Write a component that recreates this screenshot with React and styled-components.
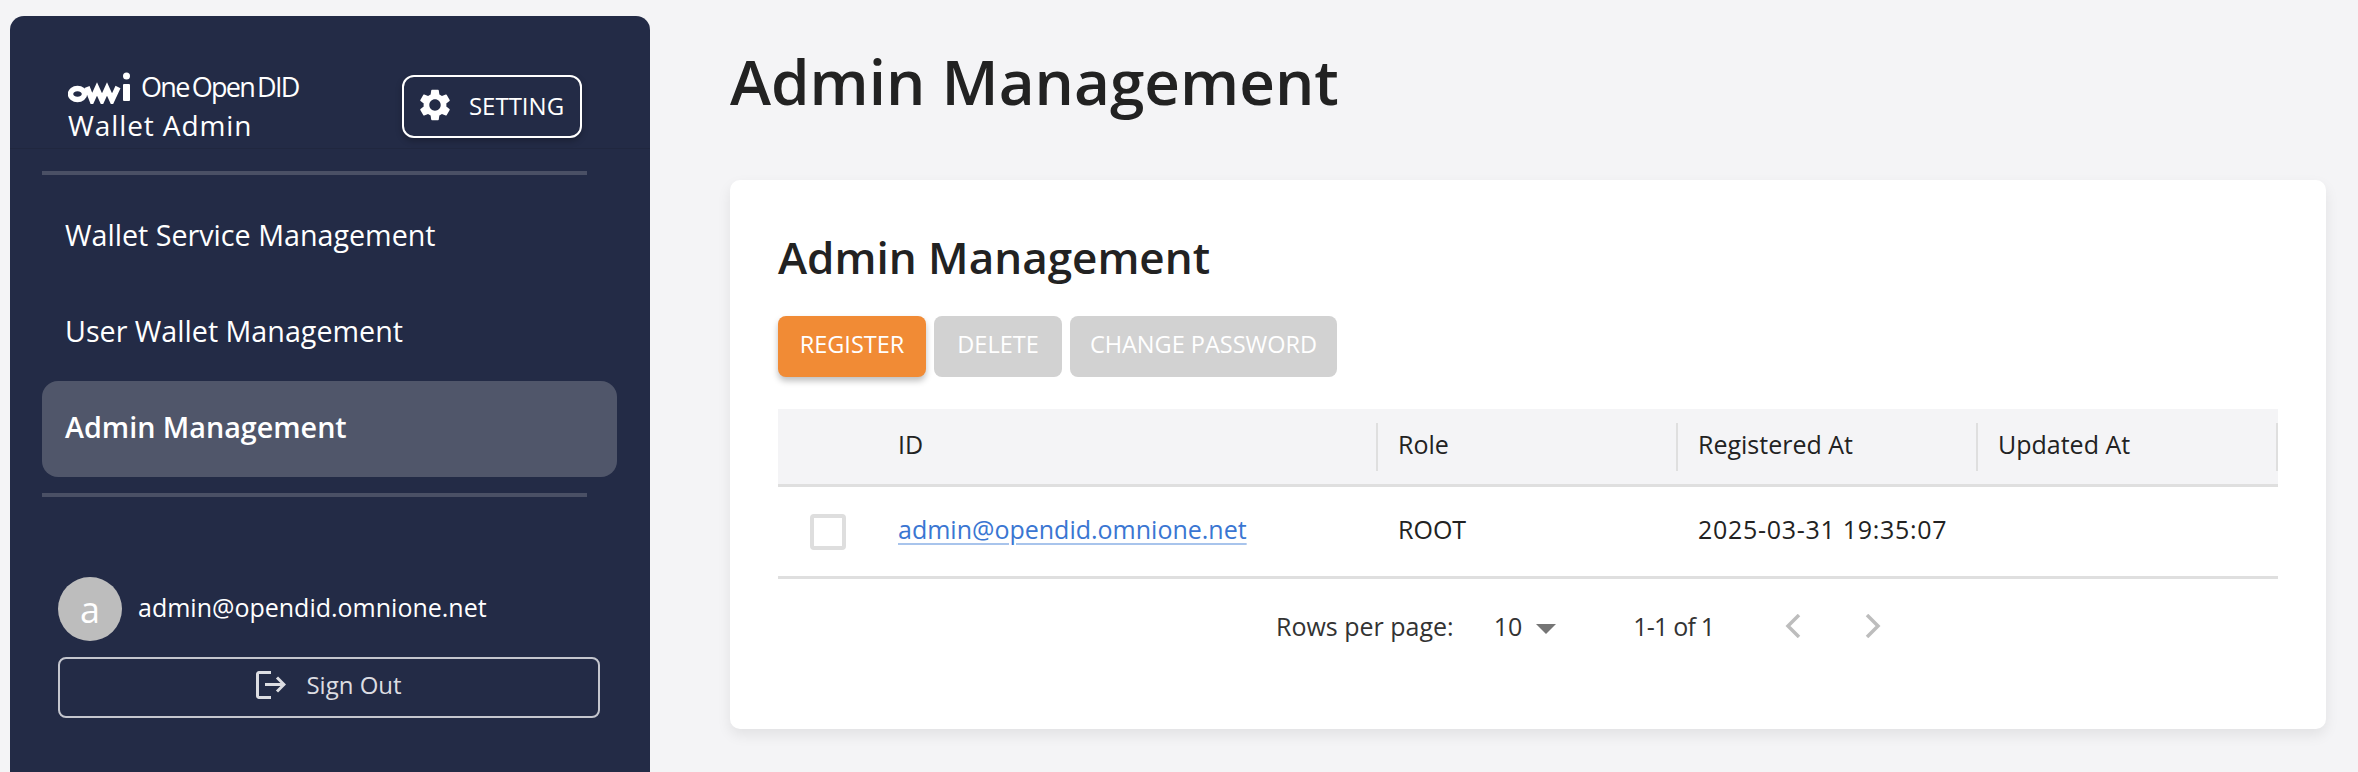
import React from "react";
import styled, { createGlobalStyle } from "styled-components";

const GlobalStyle = createGlobalStyle`
  html, body {
    margin: 0;
    padding: 0;
    background: #f4f4f6;
  }
  body {
    font-family: "Open Sans", "Noto Sans CJK KR", sans-serif;
    color: #222;
  }
`;

const Page = styled.div`
  display: flex;
  height: 772px;
  overflow: hidden;
  padding: 16px 32px 0 10px;
  box-sizing: border-box;
`;

const Sidebar = styled.aside`
  width: 640px;
  flex-shrink: 0;
  background: #232b46;
  border-radius: 14px 14px 0 0;
  color: #fff;
  display: flex;
  flex-direction: column;
`;

const SideHeader = styled.div`
  height: 133px;
  box-sizing: border-box;
  padding: 52px 68px 0 58px;
  display: flex;
  justify-content: space-between;
  border-bottom: 1px solid #20273f;
`;

const Brand = styled.div`
  display: flex;
  flex-direction: column;
`;

const LogoRow = styled.div`
  display: flex;
  align-items: flex-end;
  height: 36px;
  font-size: 27px;
  line-height: 34px;
`;

const LogoWord = styled.span`
  margin-left: ${(p) => p.$gap}px;
  letter-spacing: -1.7px;
`;

const AppName = styled.div`
  font-size: 28px;
  line-height: 42px;
  letter-spacing: 0.9px;
`;

const SettingButton = styled.button`
  width: 180px;
  height: 63px;
  margin-top: 7px;
  box-sizing: border-box;
  display: flex;
  align-items: center;
  justify-content: center;
  gap: 15px;
  padding: 0 4px 3px 0;
  background: transparent;
  color: #fff;
  border: 2px solid #fff;
  border-radius: 12px;
  font: inherit;
  font-size: 24px;
  box-shadow: 0 3px 6px rgba(0, 0, 0, 0.25);
`;

const Divider = styled.hr`
  width: 545px;
  height: 4px;
  margin: ${(p) => p.$margin};
  border: none;
  background: #4a5065;
`;

const Nav = styled.nav`
  display: flex;
  flex-direction: column;
  padding: 14px 33px 0 32px;
`;

const NavItem = styled.div`
  height: 96px;
  box-sizing: border-box;
  display: flex;
  align-items: center;
  padding: 0 0 6px 23px;
  border-radius: 16px;
  font-size: 28.7px;
  font-weight: ${(p) => (p.$active ? 600 : 400)};
  background: ${(p) => (p.$active ? "#50566a" : "transparent")};
`;

const UserBlock = styled.div`
  margin-top: 80px;
  padding: 0 50px 0 48px;
  display: flex;
  flex-direction: column;
  gap: 16px;
`;

const UserRow = styled.div`
  display: flex;
  align-items: center;
  gap: 16px;
  font-size: 25px;
`;

const UserEmail = styled.span`
  padding-bottom: 4px;
`;

const Avatar = styled.div`
  width: 64px;
  height: 64px;
  border-radius: 50%;
  background: #bdbdbd;
  color: #fff;
  font-size: 36px;
  display: flex;
  align-items: center;
  justify-content: center;
`;

const SignOut = styled.button`
  height: 61px;
  box-sizing: border-box;
  display: flex;
  align-items: center;
  justify-content: center;
  gap: 20px;
  padding: 0 0 6px;
  background: transparent;
  color: #dcdde2;
  border: 2px solid #c4c6ce;
  border-radius: 8px;
  font: inherit;
  font-size: 24px;
`;

const Main = styled.main`
  flex: 1;
  margin-left: 80px;
  min-width: 0;
`;

const Title = styled.h1`
  margin: 0;
  height: 164px;
  font-size: 62px;
  font-weight: 600;
  line-height: 130px;
  color: #222;
`;

const Card = styled.section`
  height: 549px;
  box-sizing: border-box;
  padding: 48px;
  background: #fff;
  border-radius: 10px;
  box-shadow: 0 6px 14px rgba(0, 0, 0, 0.08);
`;

const CardTitle = styled.h2`
  margin: 0 0 22px;
  height: 66px;
  font-size: 44px;
  font-weight: 600;
  line-height: 58px;
`;

const Actions = styled.div`
  display: flex;
  gap: 8px;
  margin-bottom: 32px;
`;

const ActionButton = styled.button`
  width: ${(p) => p.$width}px;
  height: 61px;
  padding: 0 0 5px;
  border: none;
  border-radius: 8px;
  font: inherit;
  font-size: 23.5px;
  color: #fff;
  background: ${(p) => (p.$primary ? "#f18b35" : "#d2d2d2")};
  box-shadow: ${(p) => (p.$primary ? "0 4px 6px rgba(0, 0, 0, 0.25)" : "none")};
`;

const Table = styled.div`
  width: 1500px;
  font-size: 25px;
`;

const HeaderRow = styled.div`
  display: grid;
  grid-template-columns: 100px 500px 300px 300px 300px;
  height: 78px;
  box-sizing: border-box;
  align-items: center;
  background: #f4f4f6;
  border-bottom: 3px solid #dfdfdf;
`;

const HeaderCell = styled.div`
  height: 48px;
  line-height: 42px;
  padding-left: 20px;
  box-sizing: border-box;
  border-right: ${(p) => (p.$plain ? "none" : "2px solid #dfdfdf")};
`;

const BodyRow = styled.div`
  display: grid;
  grid-template-columns: 100px 500px 300px 300px 300px;
  height: 92px;
  box-sizing: border-box;
  align-items: center;
  border-bottom: 3px solid #dfdfdf;
`;

const BodyCell = styled.div`
  padding: 0 0 6px 20px;
  letter-spacing: ${(p) => (p.$wide ? "0.7px" : "normal")};
`;

const CheckCell = styled.div`
  display: flex;
  padding-left: 32px;
`;

const CheckBox = styled.span`
  width: 36px;
  height: 36px;
  box-sizing: border-box;
  border: 4px solid #dedede;
  border-radius: 4px;
`;

const EmailLink = styled.a`
  color: #3a76d2;
  text-decoration: underline;
  text-decoration-color: #a8c4ec;
  text-underline-offset: 4px;
`;

const Pager = styled.div`
  display: flex;
  align-items: center;
  margin-top: 19px;
  padding-left: 498px;
  height: 56px;
  font-size: 25px;
  color: #333;
`;

const RowsValue = styled.span`
  margin-left: 40px;
`;

const Caret = styled.span`
  width: 0;
  height: 0;
  margin-left: 14px;
  margin-top: 6px;
  border-left: 10px solid transparent;
  border-right: 10px solid transparent;
  border-top: 10px solid #757575;
`;

const PageCount = styled.span`
  margin-left: 77px;
  letter-spacing: -0.8px;
`;

const PagerButton = styled.span`
  display: flex;
  margin-left: ${(p) => p.$gap}px;
`;

const LogoMark = () => (
  <svg width="68" height="32" viewBox="0 0 68 32" fill="none">
    <ellipse cx="9.5" cy="22" rx="7" ry="5.5" stroke="#fff" strokeWidth="5.5" />
    <path d="M19 15l5 13 5-11 5 11 5-11 5 11 6-13" stroke="#fff" strokeWidth="5.5" />
    <rect x="55" y="12" width="7" height="17" rx="1" fill="#fff" />
    <circle cx="58.5" cy="4" r="3.5" fill="#fff" />
  </svg>
);

const GearIcon = () => (
  <svg width="38" height="38" viewBox="0 0 24 24" fill="#fff">
    <path d="M19.14 12.94c.04-.3.06-.61.06-.94 0-.32-.02-.64-.07-.94l2.03-1.58a.49.49 0 0 0 .12-.61l-1.92-3.32a.488.488 0 0 0-.59-.22l-2.39.96c-.5-.38-1.03-.7-1.62-.94l-.36-2.54a.484.484 0 0 0-.48-.41h-3.84c-.24 0-.43.17-.47.41l-.36 2.54c-.59.24-1.13.57-1.62.94l-2.39-.96c-.22-.08-.47 0-.59.22L2.74 8.87c-.12.21-.08.47.12.61l2.03 1.58c-.05.3-.09.63-.09.94s.02.64.07.94l-2.03 1.58a.49.49 0 0 0-.12.61l1.92 3.32c.12.22.37.29.59.22l2.39-.96c.5.38 1.03.7 1.62.94l.36 2.54c.05.24.24.41.48.41h3.84c.24 0 .44-.17.47-.41l.36-2.54c.59-.24 1.13-.56 1.62-.94l2.39.96c.22.08.47 0 .59-.22l1.92-3.32c.12-.22.07-.47-.12-.61l-2.01-1.58zM12 15.6c-1.98 0-3.6-1.62-3.6-3.6s1.62-3.6 3.6-3.6 3.6 1.62 3.6 3.6-1.62 3.6-3.6 3.6z" />
  </svg>
);

const SignOutIcon = () => (
  <svg width="30" height="28" viewBox="0 0 30 28" fill="none" stroke="#dcdde2" strokeWidth="3">
    <path d="M15 1.5H3a1.5 1.5 0 0 0-1.5 1.5v22a1.5 1.5 0 0 0 1.5 1.5h12" />
    <path d="M9 13.5h19M21 6.5l7 7-7 7" />
  </svg>
);

const Chevron = ({ flip }) => (
  <svg width="16" height="24" viewBox="0 0 16 24" fill="none" stroke="#bdbdbd" strokeWidth="3.5">
    <path d={flip ? "M2 1l11 11L2 23" : "M14 1L3 12l11 11"} />
  </svg>
);

const navItems = ["Wallet Service Management", "User Wallet Management", "Admin Management"];

const App = () => {
  return (
    <>
      <GlobalStyle />
      <Page>
        <Sidebar>
          <SideHeader>
            <Brand>
              <LogoRow>
                <LogoMark />
                <LogoWord $gap={5}>One</LogoWord>
                <LogoWord $gap={3}>Open</LogoWord>
                <LogoWord $gap={3}>DID</LogoWord>
              </LogoRow>
              <AppName>Wallet Admin</AppName>
            </Brand>
            <SettingButton>
              <GearIcon />
              SETTING
            </SettingButton>
          </SideHeader>
          <Divider $margin="22px 0 0 32px" />
          <Nav>
            {navItems.map((item) => (
              <NavItem key={item} $active={item === "Admin Management"}>
                {item}
              </NavItem>
            ))}
          </Nav>
          <Divider $margin="16px 0 0 32px" />
          <UserBlock>
            <UserRow>
              <Avatar>a</Avatar>
              <UserEmail>admin@opendid.omnione.net</UserEmail>
            </UserRow>
            <SignOut>
              <SignOutIcon />
              Sign Out
            </SignOut>
          </UserBlock>
        </Sidebar>
        <Main>
          <Title>Admin Management</Title>
          <Card>
            <CardTitle>Admin Management</CardTitle>
            <Actions>
              <ActionButton $primary $width={148}>REGISTER</ActionButton>
              <ActionButton $width={128}>DELETE</ActionButton>
              <ActionButton $width={267}>CHANGE PASSWORD</ActionButton>
            </Actions>
            <Table>
              <HeaderRow>
                <HeaderCell $plain />
                <HeaderCell>ID</HeaderCell>
                <HeaderCell>Role</HeaderCell>
                <HeaderCell>Registered At</HeaderCell>
                <HeaderCell>Updated At</HeaderCell>
              </HeaderRow>
              <BodyRow>
                <CheckCell>
                  <CheckBox />
                </CheckCell>
                <BodyCell>
                  <EmailLink href="#">admin@opendid.omnione.net</EmailLink>
                </BodyCell>
                <BodyCell>ROOT</BodyCell>
                <BodyCell $wide>2025-03-31 19:35:07</BodyCell>
                <BodyCell />
              </BodyRow>
              <Pager>
                Rows per page:
                <RowsValue>10</RowsValue>
                <Caret />
                <PageCount>1-1 of 1</PageCount>
                <PagerButton $gap={71}>
                  <Chevron />
                </PagerButton>
                <PagerButton $gap={64}>
                  <Chevron flip />
                </PagerButton>
              </Pager>
            </Table>
          </Card>
        </Main>
      </Page>
    </>
  );
};

export default App;
